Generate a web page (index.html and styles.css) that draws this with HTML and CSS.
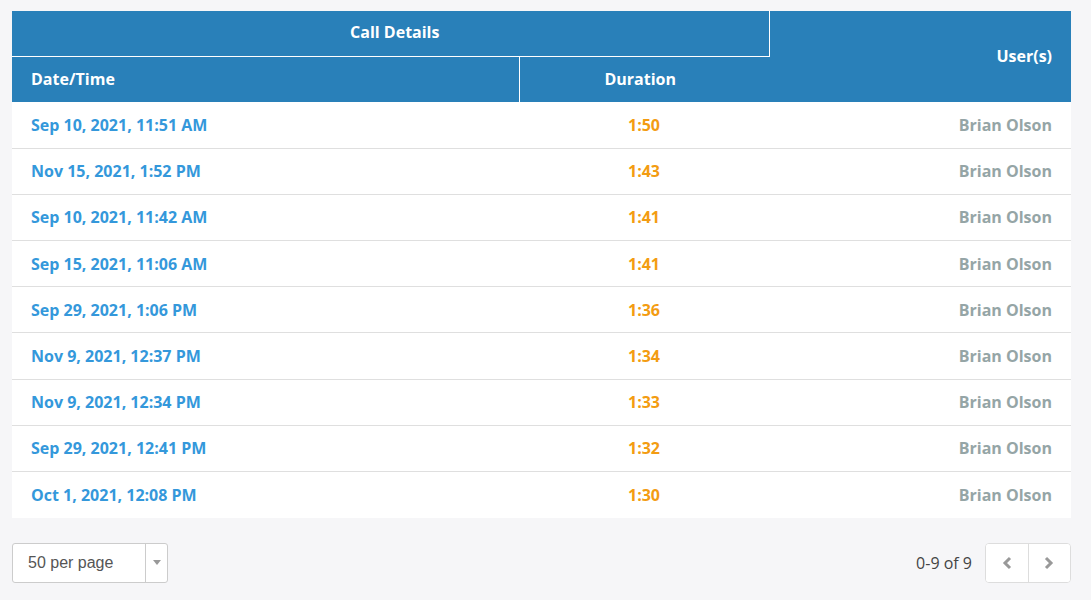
FILE: index.html
```html
<!DOCTYPE html>
<html>
<head>
<meta charset="utf-8">
<link rel="stylesheet" href="styles.css">
</head>
<body>
<div class="page">
  <table class="calls">
    <colgroup>
      <col class="c-date">
      <col class="c-dur">
      <col class="c-user">
    </colgroup>
    <thead>
      <tr class="h1">
        <th colspan="2" class="group">Call Details</th>
        <th rowspan="2" class="users">User(s)</th>
      </tr>
      <tr class="h2">
        <th class="date">Date/Time</th>
        <th class="dur">Duration</th>
      </tr>
    </thead>
    <tbody>
      <tr><td class="date">Sep 10, 2021, 11:51 AM</td><td class="dur">1:50</td><td class="user">Brian Olson</td></tr>
      <tr><td class="date">Nov 15, 2021, 1:52 PM</td><td class="dur">1:43</td><td class="user">Brian Olson</td></tr>
      <tr><td class="date">Sep 10, 2021, 11:42 AM</td><td class="dur">1:41</td><td class="user">Brian Olson</td></tr>
      <tr><td class="date">Sep 15, 2021, 11:06 AM</td><td class="dur">1:41</td><td class="user">Brian Olson</td></tr>
      <tr><td class="date">Sep 29, 2021, 1:06 PM</td><td class="dur">1:36</td><td class="user">Brian Olson</td></tr>
      <tr><td class="date">Nov 9, 2021, 12:37 PM</td><td class="dur">1:34</td><td class="user">Brian Olson</td></tr>
      <tr><td class="date">Nov 9, 2021, 12:34 PM</td><td class="dur">1:33</td><td class="user">Brian Olson</td></tr>
      <tr><td class="date">Sep 29, 2021, 12:41 PM</td><td class="dur">1:32</td><td class="user">Brian Olson</td></tr>
      <tr><td class="date">Oct 1, 2021, 12:08 PM</td><td class="dur">1:30</td><td class="user">Brian Olson</td></tr>
    </tbody>
  </table>

  <div class="footer">
    <div class="per-page">
      <span class="pp-label">50 per page</span>
      <span class="pp-arrow">
        <svg width="8" height="5" viewBox="0 0 8 5"><path d="M0 0h8L4 5z" fill="#999"/></svg>
      </span>
    </div>
    <div class="pager">
      <span class="count">0-9 of 9</span>
      <div class="btns">
        <button class="btn">
          <svg width="10" height="14" viewBox="0 0 10 14"><path d="M8 2L3 7 8 12" fill="none" stroke="#999" stroke-width="3"/></svg>
        </button>
        <button class="btn">
          <svg width="10" height="14" viewBox="0 0 10 14"><path d="M2 2L7 7 2 12" fill="none" stroke="#999" stroke-width="3"/></svg>
        </button>
      </div>
    </div>
  </div>
</div>
</body>
</html>
```

FILE: styles.css
```css
html, body {
  margin: 0;
  padding: 0;
  background: #f6f6f8;
}

.page {
  padding: 11px 20px 0 12px;
  font-family: "Open Sans", "Liberation Sans", sans-serif;
}

.calls {
  width: 1059px;
  border-collapse: collapse;
  table-layout: fixed;
  background: #fff;
}

.c-date { width: 507px; }
.c-dur { width: 250px; }
.c-user { width: 302px; }

.calls th {
  background: #2980b9;
  color: #fff;
  font-weight: 700;
  font-size: 16px;
  padding: 0 19px;
  height: 46px;
  box-sizing: border-box;
}

.calls th.group {
  text-align: center;
  border-right: 1px solid #fff;
  border-bottom: 1px solid #fff;
  height: 45px;
  padding: 0 10px 2px 19px;
}

.calls th.users {
  text-align: right;
  padding-bottom: 2px;
}

.calls th.date {
  text-align: left;
}

.calls th.dur {
  text-align: center;
  border-left: 1px solid #fff;
  padding: 0 27px 0 19px;
}

.calls td {
  height: 46.2px;
  box-sizing: border-box;
  padding: 0 19px;
  font-size: 16px;
  font-weight: 700;
  border-top: 1px solid #dfdfdf;
}

.calls tbody tr:first-child td {
  border-top: none;
}

.calls td.date { color: #3498db; text-align: left; }
.calls td.dur { color: #f39c12; text-align: center; }
.calls td.user { color: #95a5a6; text-align: right; }

.footer {
  width: 1059px;
  margin-top: 25px;
  display: flex;
  justify-content: space-between;
  align-items: center;
}

.per-page {
  display: flex;
  width: 156px;
  height: 40px;
  box-sizing: border-box;
  border: 1px solid #ccc;
  border-radius: 3px;
  background: #fff;
}

.pp-label {
  flex: 1;
  display: flex;
  align-items: center;
  padding-left: 15px;
  font-family: "Liberation Sans", Arial, sans-serif;
  font-size: 16px;
  color: #555;
  border-right: 1px solid #ccc;
}

.pp-arrow {
  width: 21px;
  display: flex;
  align-items: center;
  justify-content: center;
}

.pager {
  display: flex;
  align-items: center;
  gap: 13px;
}

.count {
  font-size: 16px;
  color: #444;
}

.btns {
  display: flex;
  width: 86px;
  height: 40px;
  box-sizing: border-box;
  border: 1px solid #ddd;
  border-radius: 4px;
  background: #fff;
  overflow: hidden;
}

.btn {
  flex: 1;
  height: 100%;
  border: none;
  background: #fff;
  padding: 0;
  display: flex;
  align-items: center;
  justify-content: center;
}

.btn + .btn {
  border-left: 1px solid #ddd;
}
```
